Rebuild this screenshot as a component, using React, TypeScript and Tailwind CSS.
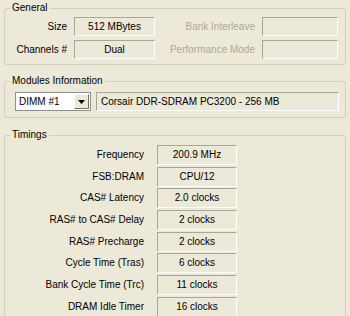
import React from "react";

const boxCls =
  "h-[19px] flex items-center justify-center border-t border-l border-t-[#A7A698] border-l-[#A7A698] border-b border-r border-b-white border-r-white bg-[#ECE9D8] text-black";

function Group({ title, className, children }: { title: string; className?: string; children: React.ReactNode }) {
  return (
    <fieldset className={"border border-[#D0D0BF] rounded-[3px] " + (className ?? "")}>
      <legend className="ml-[5px] px-[2px] leading-[12px] text-black">{title}</legend>
      {children}
    </fieldset>
  );
}

const timings: [string, string][] = [
  ["Frequency", "200.9 MHz"],
  ["FSB:DRAM", "CPU/12"],
  ["CAS# Latency", "2.0 clocks"],
  ["RAS# to CAS# Delay", "2 clocks"],
  ["RAS# Precharge", "2 clocks"],
  ["Cycle Time (Tras)", "6 clocks"],
  ["Bank Cycle Time (Trc)", "11 clocks"],
  ["DRAM Idle Timer", "16 clocks"],
  ["", ""],
];

export default function App() {
  return (
    <div
      className="w-[350px] h-[316px] overflow-hidden bg-[#ECE9D8] px-[4px] pt-[2px] text-[10px] leading-[12px]"
      style={{ fontFamily: '"Liberation Sans", Arial, sans-serif' }}
    >
      <Group title="General" className="h-[63px]">
        <div className="flex flex-col gap-[4px] pt-[3px]">
          <div className="flex items-center">
            <div className="w-[62px] text-right">Size</div>
            <div className={boxCls + " ml-[7px] w-[81px]"}>512 MBytes</div>
            <div className="w-[100px] text-right text-[#ACA899]">Bank Interleave</div>
            <div className={boxCls + " ml-[7px] w-[76px]"}></div>
          </div>
          <div className="flex items-center">
            <div className="w-[62px] text-right">Channels #</div>
            <div className={boxCls + " ml-[7px] w-[81px]"}>Dual</div>
            <div className="w-[100px] text-right text-[#ACA899]">Performance Mode</div>
            <div className={boxCls + " ml-[7px] w-[76px]"}></div>
          </div>
        </div>
      </Group>

      <Group title="Modules Information" className="mt-[10px] h-[43px]">
        <div className="flex items-center pt-[5px] pl-[10px]">
          <div className="w-[76px] h-[19px] flex items-center bg-white border border-[#8E8E8E]">
            <span className="flex-1 pl-[3px] text-black">DIMM #1</span>
            <div className="w-[15px] h-[15px] mr-[1px] flex items-center justify-center bg-[#ECE9D8] border border-t-white border-l-white border-b-[#716F64] border-r-[#716F64]">
              <svg width="7" height="4" viewBox="0 0 7 4">
                <path d="M0 0H7L3.5 4Z" fill="#000" />
              </svg>
            </div>
          </div>
          <div className={"ml-[5px] w-[243px] h-[19px] flex items-center pl-[4px] border-t border-l border-t-[#A7A698] border-l-[#A7A698] border-b border-r border-b-white border-r-white"}>
            Corsair DDR-SDRAM PC3200 - 256 MB
          </div>
        </div>
      </Group>

      <Group title="Timings" className="mt-[11px] h-[220px]">
        <div className="grid auto-rows-[21.7px] pt-[3px]">
          {timings.map(([l, v], i) => (
            <div key={i} className="flex items-center">
              <div className="w-[139px] text-right">{l}</div>
              <div className={boxCls + " ml-[13px] w-[80px] h-[20px]"}>{v}</div>
            </div>
          ))}
        </div>
      </Group>
    </div>
  );
}
